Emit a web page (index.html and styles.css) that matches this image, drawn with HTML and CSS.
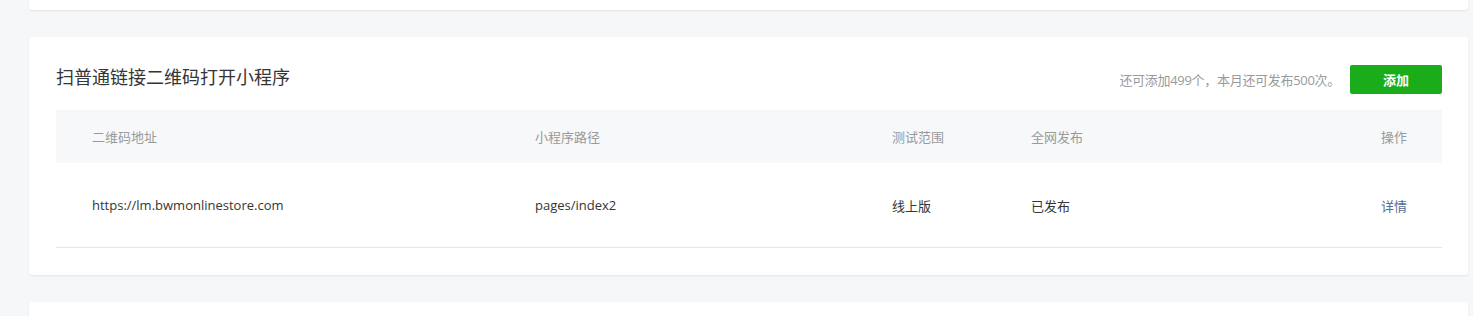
FILE: index.html
```html
<!DOCTYPE html>
<html lang="zh-CN">
	<head>
		<meta charset="UTF-8" />
		<title>扫普通链接二维码打开小程序</title>
		<link rel="stylesheet" href="styles.css">
	</head>
	<body>
		<div class="page">
			<div class="card card-top"></div>
			<div class="card">
				<div class="card-hd">
					<h2>扫普通链接二维码打开小程序</h2>
					<div class="tools">
						<span class="tips">还可添加499个，本月还可发布500次。</span>
						<button>添加</button>
					</div>
				</div>
				<div class="table">
					<div class="row head">
						<span class="col-url">二维码地址</span>
						<span class="col-path">小程序路径</span>
						<span class="col-range">测试范围</span>
						<span class="col-pub">全网发布</span>
						<span class="col-op">操作</span>
					</div>
					<div class="row">
						<span class="col-url">https://lm.bwmonlinestore.com</span>
						<span class="col-path">pages/index2</span>
						<span class="col-range">线上版</span>
						<span class="col-pub">已发布</span>
						<span class="col-op"><a href="#">详情</a></span>
					</div>
				</div>
			</div>
			<div class="card card-next"></div>
		</div>
	</body>
</html>
```
FILE: styles.css
```css
body {
	margin: 0;
	background: #f6f7f9;
	color: #353535;
	font-family: "Open Sans", "Noto Sans CJK SC", sans-serif;
	font-size: 13px;
}
.page {
	padding: 0 5px 0 29px;
	display: flex;
	flex-direction: column;
	gap: 27px;
	margin-top: -40px;
}
.card {
	background: #fff;
	border-radius: 3px;
	box-shadow: 0 1px 2px rgba(0, 0, 0, 0.08);
	padding: 0 26px 27px 27px;
}
.card-top {
	height: 50px;
	padding: 0;
}
.card-next {
	height: 60px;
	padding: 0;
}
.card-hd {
	display: flex;
	justify-content: space-between;
	align-items: center;
	height: 73px;
}
.card-hd h2 {
	margin: 4px 0 0;
	font-size: 18px;
	font-weight: normal;
	color: #353535;
}
.tools {
	display: flex;
	align-items: center;
	gap: 10px;
	margin-top: 12px;
}
.tips {
	color: #9a9a9a;
	font-size: 13px;
	letter-spacing: -0.3px;
}
button {
	width: 92px;
	height: 29px;
	background: #1aad19;
	border: 0;
	border-radius: 2px;
	color: #fff;
	font-family: inherit;
	font-size: 13px;
	font-weight: bold;
}
.table .row {
	display: flex;
	align-items: center;
	height: 84px;
	padding: 0 35px 0 36px;
	border-bottom: 1px solid #e4e8eb;
}
.table .row.head {
	height: 53px;
	background: #f6f8f9;
	color: #9a9a9a;
	border-bottom: 0;
}
.col-url {
	width: 443px;
}
.col-path {
	width: 357px;
}
.col-range {
	width: 139px;
}
.col-pub {
	flex: 1 1 auto;
}
.col-op {
	text-align: right;
}
.col-op a {
	color: #576b95;
	text-decoration: none;
}
```
